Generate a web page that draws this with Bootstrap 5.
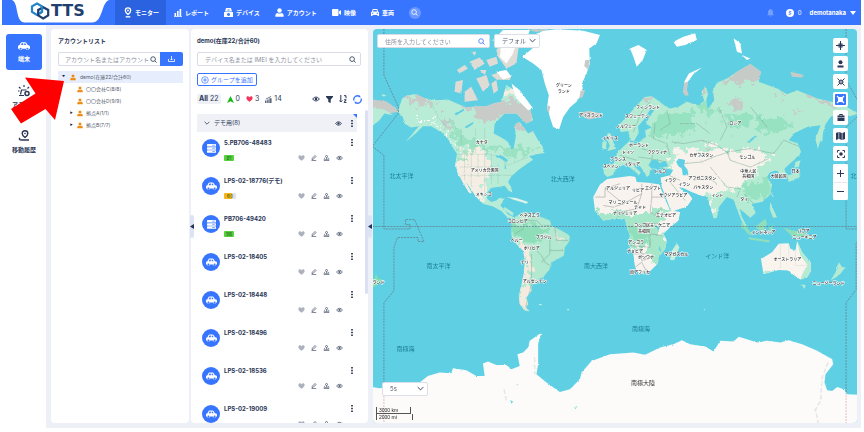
<!DOCTYPE html>
<html lang="ja">
<head>
<meta charset="utf-8">
<meta name="viewport" content="width=device-width, initial-scale=1">
<title>TTS モニター</title>
<link href="https://cdn.jsdelivr.net/npm/bootstrap@5.3.0/dist/css/bootstrap.min.css" rel="stylesheet">
<style>
:root{--blue:#3875ff;--ink:#2b3757;--line:#d9dce6;--shell:#eef0f7}
body{font-family:Inter,"Noto Sans CJK JP",sans-serif;font-size:6px;line-height:8px;color:var(--ink);background:#fff}
svg{display:block;flex:none}
button,input,select{font:inherit;color:inherit}
button{border:0;background:none;padding:0}
a{color:inherit;text-decoration:none}
.app{height:100vh;padding:0 3px 4px 2px}
.topbar{height:25px;background:var(--blue);color:#fff;font-weight:700}
.brand{width:113px;height:25px;position:relative}
.brand .tab{position:absolute;left:0;top:0}
.brand .mark-row{position:relative;padding:2px 0 0 28px;gap:1px;color:#1f3f70;font:bold 16px/18px "DejaVu Sans",sans-serif}
.menu a{height:25px;padding:0 7px 0 8px;gap:3px}
.menu a.on{background:#2a62df;padding-left:9px}
.find{width:12px;height:12px;border-radius:50%;background:#6b98ff;margin-left:8px}
.userbar{padding-right:5px}
.rail{width:44px;padding-top:9px;font-weight:700;gap:9px}
.rail a{width:36px;height:36px;border-radius:3px;gap:4px}
.rail a.on{background:var(--blue);color:#fff}
.stage{background:var(--shell);padding:4px 4px 5px 5px}
.panel{background:#fff;border-radius:4px}
.accounts{width:138px;padding:8px 6px 0 7px}
.devices{width:177px;padding:8px 0 0 6px;margin-left:2px}
.head{font-size:6px;font-weight:700;margin:0 0 8px}
.field{height:14px;min-width:0;border:1px solid var(--line);border-radius:2px;background:#fff;padding:0 4px 0 7px}
.field.wide{margin-right:7px}
.field.addr{width:113px}
.field input{border:0;outline:0;min-width:0;width:0;background:none;padding:0;height:12px}
.field input::placeholder{color:#8b90a0;opacity:1}
.field.joined{border-radius:2px 0 0 2px;border-right:0;padding:0 3px 0 6px}
.import{width:23px;height:14px;flex:none;background:var(--blue);color:#fff;border-radius:0 2px 2px 0}
.tree{margin-top:5px;color:#555c6c;font-size:5px}
.tree .node{height:12px;gap:4px;padding-left:4px}
.tree .node.sub{padding-left:12px;gap:3px}
.tree .node.sel{background:#e6eefd}
.twist{width:4px;font-size:3px;color:#223}
.orange{color:#f08a12}
.addgrp{height:13px;border:1px solid var(--blue);border-radius:2px;color:var(--blue);padding:0 3px;gap:2px;margin-top:7px}
.filters{height:12px;margin:7px 6px 0 0;font-size:7px;gap:6px}
.filters .all{background:#eef0f6;border-radius:2px;padding:1px 2px}
.filters .tools{gap:6px}
.filters .gap-x{gap:2px}
.group{height:18px;flex:none;margin:9px 11px 0 0;background:#f0f1f6;padding:0 4px 0 7px;position:relative}
.group:after{content:"";position:absolute;right:0;top:0;border:2px solid var(--blue);border-left-color:transparent;border-bottom-color:transparent}
.group .more{margin-left:9px}
.list{margin-right:11px;padding-top:1px}
.device{height:38px;padding:6px 4px 0 5px;gap:4px}
.ava{width:18px;height:18px;border-radius:50%;background:var(--blue);color:#fff}
.device h3{font-size:6px;line-height:8px;font-weight:700;margin:0}
.meta{height:10px;margin-top:6px}
.cell{width:10px;height:6px;border-radius:1px;background:#54d13c;color:#2a6b22;font-size:5px;line-height:6px}
.cell.mid{width:12px;background:linear-gradient(90deg,#f7b51a 65%,#dfe2ea 0)}
.acts{gap:6px;color:#5b657c;padding-right:4px}
.bar{position:absolute;right:0;top:81px;width:3px;height:184px;background:#dbe1f3;border-radius:2px}
.grip{position:absolute;width:4px;height:23px;top:186px;z-index:2;background:#dbe3f5;border-radius:2px}
.grip.west{left:-1px}
.grip.east{right:-4px}
.map{margin-left:5px;border-radius:4px;background:#5fd0e4;overflow:hidden}
.world{position:absolute;inset:0;width:100%;height:100%}
.world text{font-family:"Noto Sans CJK JP",sans-serif;font-size:4px;font-weight:500;fill:#222;text-anchor:middle;stroke:#fff;stroke-width:1px;paint-order:stroke}
.world .sea text{font-size:6px;fill:#1c7e93;stroke:none;font-weight:400}
.world .sea .land{fill:#333}
.over{position:relative;z-index:1}
.mapmain{padding:5px 0 3px 3px}
.mapmain .tops{gap:4px;padding-left:1px}
.pick{height:14px;border:1px solid #dcdfe8;border-radius:2px;background:#fff;padding:0 7px;appearance:none;width:46px;color:#50586d}
.pickbox{position:relative}
.pickbox svg{position:absolute;right:4px;top:4px;pointer-events:none}
.pickbox.every{margin:0 0 11px 6px}
.side{gap:3px;padding:9px 9px 0 0}
.side button,.zoomer{width:15px;background:#fff;border-radius:2px}
.side button{height:15px}
.side .zoomer button{height:18px}
.zoomer button+button{border-top:1px solid #e5e7ee}
.side button.on{color:var(--blue)}
.scale{font:5px/6px "Liberation Sans",sans-serif;color:#222}
.scale div{border-left:1px solid #555;padding-left:2px}
.scale .km{width:35px;border-right:1px solid #555;border-bottom:1px solid #555}
.scale .mi{width:37px;border-right:1px solid #555}
.arrow{position:absolute;left:11px;top:76px;z-index:5;pointer-events:none}
</style>
<script src="https://cdn.jsdelivr.net/npm/bootstrap@5.3.0/dist/js/bootstrap.bundle.min.js"></script>
</head>
<body>
<svg width="0" height="0" class="position-absolute" aria-hidden="true">
<symbol id="car" viewBox="0 0 16 12"><path fill="currentColor" fill-rule="evenodd" d="M3.500 1.200Q4 .2 5.200.2H9.500Q10.500.2 11 1l2 3 1.800.7Q16 5 16 6.300V9h-1.300a2.200 2.200 0 0 1-4.300 0H5.700a2.200 2.200 0 0 1-4.300 0H0V6q0-1.500 2-2ZM5 1.700 4 4h3V1.700ZM8.300 1.700V4h2.700L9.500 1.700ZM3.500 7.500a1.300 1.300 0 1 0 .1 0ZM12.500 7.500a1.300 1.300 0 1 0 .1 0Z"/></symbol>
<symbol id="server" viewBox="0 0 12 12"><g fill="currentColor"><rect y="0" width="12" height="3.300" rx=".8"/><rect y="4.200" width="12" height="3.300" rx=".8"/><rect y="8.400" width="12" height="3.300" rx=".8"/></g><path d="M7 1.600h3.500M7 5.800h3.500M7 10h3.500" stroke="#3875ff" stroke-width=".8"/></symbol>
<symbol id="user" viewBox="0 0 12 12"><circle cx="6" cy="3.200" r="3" fill="currentColor"/><path d="M.5 11.500V9.500Q.5 7 3.500 6.500q2.500 1.800 5 0 3 .5 3 3v2Z" fill="currentColor"/></symbol>
<symbol id="pin" viewBox="0 0 12 16"><path fill="none" stroke="currentColor" stroke-width="2" d="M6 11Q2 8 2 5a4 4 0 0 1 8 0q0 3-4 6Z"/><circle cx="6" cy="5" r="1.400" fill="currentColor"/><path stroke="currentColor" stroke-width="2" d="M2.500 14.500h7"/></symbol>
<symbol id="glass" viewBox="0 0 12 12"><circle cx="5.300" cy="5.300" r="4" fill="none" stroke="currentColor" stroke-width="1.400"/><path d="m8.300 8.300 3 3" stroke="currentColor" stroke-width="1.400"/></symbol>
<symbol id="eye" viewBox="0 0 14 10"><path d="M1 5q6-7 12 0-6 7-12 0Z" fill="none" stroke="currentColor" stroke-width="1.600"/><circle cx="7" cy="5" r="2.300" fill="currentColor"/></symbol>
<symbol id="heart" viewBox="0 0 12 11"><path fill="currentColor" d="M6 10.500C2 7.500.3 5.800.3 3.500.3.500 4 -.500 6 2.300 8-.500 11.700.500 11.700 3.500c0 2.300-1.700 4-5.700 7Z"/></symbol>
<symbol id="pen" viewBox="0 0 12 12"><path d="M2.500 6.500 8 1l2 2-5.500 5.500-2.500.5ZM1 11.200h9.500" fill="none" stroke="currentColor" stroke-width="1.700"/></symbol>
<symbol id="track" viewBox="0 0 12 12"><circle cx="6" cy="3" r="2" fill="none" stroke="currentColor" stroke-width="1.700"/><path d="M6 5v3M3 6.500H2L1 11h10l-1-4.500H8M3.500 9h5" fill="none" stroke="currentColor" stroke-width="1.500"/></symbol>
<symbol id="dots" viewBox="0 0 3 12"><path fill="currentColor" d="M0 0h3v2.500H0zM0 4.700h3v2.500H0zM0 9.400h3v2.500H0z"/></symbol>
<symbol id="down" viewBox="0 0 10 6"><path d="m1 1 4 4 4-4" fill="none" stroke="currentColor" stroke-width="1.300"/></symbol>
</svg>

<div class="app d-flex flex-column position-relative">
<header class="topbar d-flex align-items-center">
  <div class="brand">
    <svg class="tab" width="113" height="25" viewBox="0 0 113 25"><path fill="#fff" d="M10 0C17 3 13 22.500 23 22.500H90C101 22.500 99 3 107 0Z"/></svg>
    <div class="mark-row d-flex align-items-center">
      <svg width="20" height="18" viewBox="0 0 20 18"><g fill="none" stroke-width="2.200"><path stroke="#2384c8" d="M7 1.500 12 4.300V10L7 13 2 10V4.300Z"/><path stroke="#1f3f70" d="M13.200 5.200 18.200 8v5.500l-5 3-5-3V8Z"/><path stroke="#2384c8" d="M12 4.300V10L9.500 11.500"/></g></svg>
      <span>TTS</span>
    </div>
  </div>
  <nav class="menu d-flex align-items-center">
    <a href="#" class="on d-flex align-items-center"><svg width="8" height="11"><use href="#pin"/></svg>モニター</a>
    <a href="#" class="d-flex align-items-center"><svg width="8" height="8" viewBox="0 0 8 8"><path fill="#fff" d="M.5 4h1.600v3H.5zM3 2h1.600v5H3zM5.500 0h1.700v7H5.500zM0 7.300h8V8H0z"/></svg>レポート</a>
    <a href="#" class="d-flex align-items-center"><svg width="9" height="9" viewBox="0 0 9 9"><path fill="#fff" fill-rule="evenodd" d="M2 0h5l1 3.500H1ZM0 4h9v5H0ZM3.500 1.500h2v1h-2ZM4.500 5a1.500 1.500 0 1 0 .1 0Z"/></svg>デバイス</a>
    <a href="#" class="d-flex align-items-center"><svg width="9" height="9"><use href="#user"/></svg>アカウント</a>
    <a href="#" class="d-flex align-items-center"><svg width="9" height="7" viewBox="0 0 9 7"><path fill="#fff" d="M0 1q0-1 1-1h4.500q1 0 1 1v5q0 1-1 1H1Q0 7 0 6ZM7 2.500 9 1v5L7 4.500Z"/></svg>映像</a>
    <a href="#" class="d-flex align-items-center"><svg width="8" height="7" viewBox="0 0 8 7"><path fill="#fff" fill-rule="evenodd" d="M1.800 0h4.400l1 2.700.8.500V7H6.500V6h-5v1H0V3.200l.8-.5ZM2.400 1 1.900 2.600h4.200L5.600 1ZM1 3.700v1h1.300v-1ZM5.700 3.700v1H7v-1Z"/></svg>車両</a>
  </nav>
  <button class="find d-flex align-items-center justify-content-center" aria-label="検索"><svg width="7" height="7"><use href="#glass"/></svg></button>
  <div class="userbar ms-auto d-flex align-items-center">
    <svg width="7" height="8" viewBox="0 0 7 8" class="me-2"><path fill="#759fff" d="M3.500 0Q6 .5 6 3.500V5l1 1.200H0L1 5V3.500Q1 .5 3.500 0ZM2.500 6.800h2Q3.500 8.500 2.500 6.800Z"/></svg>
    <svg width="8" height="8" viewBox="0 0 8 8" class="ms-1 me-1"><circle cx="4" cy="4" r="4" fill="#fff"/><path d="M5.300 2.500Q3 1.800 3 3t2 1.200Q5 6 2.700 5.300" fill="none" stroke="#3875ff" stroke-width=".8"/></svg>
    <span class="fw-normal me-2">0</span>
    <a href="#" class="d-flex align-items-center gap-1">demotanaka <svg width="6" height="4" viewBox="0 0 6 4"><path fill="#fff" d="M0 0h6L3 4Z"/></svg></a>
  </div>
</header>

<div class="d-flex flex-grow-1 overflow-hidden">
<nav class="rail d-flex flex-column align-items-center flex-shrink-0">
  <a href="#" class="on d-flex flex-column align-items-center justify-content-center"><svg width="12" height="9"><use href="#car"/></svg>端末</a>
  <a href="#" class="d-flex flex-column align-items-center justify-content-center"><svg width="12" height="12" viewBox="0 0 12 12"><path fill="none" stroke="currentColor" stroke-width="1.200" d="M6 0v2M1 2l1.500 1.500M11 2 9.500 3.500M2.500 9.500 3.500 5h5M1 10.500h5M0 6h1.500"/><circle cx="9" cy="8.500" r="2" fill="none" stroke="currentColor" stroke-width="1.500"/></svg>アラート</a>
  <a href="#" class="d-flex flex-column align-items-center justify-content-center"><svg width="12" height="12" viewBox="0 0 12 12"><path fill="none" stroke="currentColor" stroke-width="1.400" d="M7 7.500Q4.200 5.500 4.200 3.500a2.800 2.800 0 0 1 5.600 0Q9.800 5.500 7 7.500ZM2 8Q0 10 4 10h7"/><circle cx="7" cy="3.500" r=".8" fill="currentColor"/></svg>移動履歴</a>
</nav>

<main class="stage d-flex flex-grow-1">
<section class="panel accounts flex-shrink-0">
  <h2 class="head">アカウントリスト</h2>
  <div class="d-flex">
    <div class="field joined d-flex align-items-center flex-grow-1"><input class="flex-grow-1" type="text" aria-label="アカウント検索" placeholder="アカウント名またはアカウント"><svg width="7" height="7"><use href="#glass"/></svg></div>
    <button class="import d-flex align-items-center justify-content-center" aria-label="インポート"><svg width="7" height="6" viewBox="0 0 7 6"><path d="M.5 3v2.500h6V3M3.500 0v4M2.300 2.800 3.500 4l1.200-1.200" fill="none" stroke="#fff" stroke-width=".8"/></svg></button>
  </div>
  <div class="tree">
    <div class="node sel d-flex align-items-center"><span class="twist">▼</span><svg class="orange" width="6" height="7"><use href="#user"/></svg>demo(在庫22/合計60)</div>
    <div class="node sub d-flex align-items-center"><span class="twist"></span><svg class="orange" width="6" height="7"><use href="#user"/></svg>〇〇会社C(8/8)</div>
    <div class="node sub d-flex align-items-center"><span class="twist"></span><svg class="orange" width="6" height="7"><use href="#user"/></svg>〇〇会社D(9/9)</div>
    <div class="node sub d-flex align-items-center"><span class="twist">▶</span><svg class="orange" width="6" height="7"><use href="#user"/></svg>拠点A(1/1)</div>
    <div class="node sub d-flex align-items-center"><span class="twist">▶</span><svg class="orange" width="6" height="7"><use href="#user"/></svg>拠点B(7/7)</div>
  </div>
</section>

<section class="panel devices flex-shrink-0 position-relative d-flex flex-column">
  <button class="grip west d-flex align-items-center" aria-label="パネルを閉じる"><svg width="4" height="5" viewBox="0 0 4 5"><path fill="#26325a" d="M4 0v5L0 2.500Z"/></svg></button>
  <button class="grip east d-flex align-items-center" aria-label="一覧を閉じる"><svg width="4" height="5" viewBox="0 0 4 5"><path fill="#26325a" d="M4 0v5L0 2.500Z"/></svg></button>
  <div class="bar"></div>
  <h2 class="head">demo(在庫22/合計60)</h2>
  <div class="field wide d-flex align-items-center flex-shrink-0"><input class="flex-grow-1" type="text" aria-label="デバイス検索" placeholder="デバイス名または IMEI を入力してください"><svg width="7" height="7"><use href="#glass"/></svg></div>
  <div class="d-flex"><button class="addgrp d-flex align-items-center"><svg width="8" height="8" viewBox="0 0 8 8"><circle cx="4" cy="4" r="3.300" fill="none" stroke="currentColor" stroke-width=".7"/><path d="M2.200 4h3.600M4 2.200v3.600" stroke="currentColor" stroke-width=".8"/></svg>グループを追加</button></div>
  <div class="filters d-flex align-items-center flex-shrink-0">
    <span class="all"><b>All</b> 22</span>
    <span class="gap-x d-flex align-items-center"><svg width="7" height="7" viewBox="0 0 6 6"><path fill="#14b814" d="M3 0 6 6 3 4.500 0 6Z"/></svg>0</span>
    <span class="gap-x d-flex align-items-center"><svg width="7" height="6" color="#f5365c"><use href="#heart"/></svg>3</span>
    <span class="gap-x d-flex align-items-center"><svg width="7" height="7" viewBox="0 0 8 8"><path fill="#59647b" d="M0 5h1.700v3H0zM2.500 4h1.700v4H2.500zM5 2.500h2.500V8H5z"/><path d="M1 3.500 7 .500" stroke="#59647b"/></svg>14</span>
    <span class="tools ms-auto d-flex align-items-center">
      <svg width="8" height="6"><use href="#eye"/></svg>
      <svg width="7" height="7" viewBox="0 0 7 7"><path fill="currentColor" d="M0 0h7v1L4.700 3.500V7L2.300 6V3.500L0 1Z"/></svg>
      <svg width="8" height="8" viewBox="0 0 8 8"><path d="M1.800 0v7M.3 5.500 1.800 7l1.500-1.500M5 .7h2v2.600M5 4.800h2.200L5 7.400h2.500" fill="none" stroke="currentColor"/></svg>
      <svg width="9" height="9" viewBox="0 0 9 9"><path d="M1 5.500A3.500 3.500 0 0 1 6.500 1.600M8 3.500A3.500 3.500 0 0 1 2.500 7.400" fill="none" stroke="#3875ff" stroke-width="1.300"/><path fill="#3875ff" d="m6 0 2 2.200H5.500ZM3 9 1 6.800h2.500Z"/></svg>
    </span>
  </div>
  <div class="group d-flex align-items-center"><svg width="6" height="4" class="me-1"><use href="#down"/></svg><span>デモ用(8)</span><span class="ms-auto d-flex align-items-center"><svg width="7" height="5"><use href="#eye"/></svg><svg class="more" width="2" height="7"><use href="#dots"/></svg></span></div>
  <div class="list flex-grow-1 overflow-hidden" id="list"></div>
</section>

<section class="map flex-grow-1 position-relative d-flex">
<svg class="world" viewBox="373 29 484 393" preserveAspectRatio="xMidYMid slice">
<defs>
<filter id="rough" x="-5%" y="-5%" width="110%" height="110%" color-interpolation-filters="sRGB"><feTurbulence type="fractalNoise" baseFrequency=".25" numOctaves="3" seed="4"/><feDisplacementMap in="SourceGraphic" scale="6" xChannelSelector="R" yChannelSelector="G"/></filter>
<filter id="patch" x="-5%" y="-5%" width="110%" height="110%" color-interpolation-filters="sRGB"><feTurbulence type="fractalNoise" baseFrequency=".05" numOctaves="4" seed="9"/><feDisplacementMap in="SourceGraphic" scale="60" xChannelSelector="R" yChannelSelector="G"/></filter>
<clipPath id="ca"><path id="na" d="M98 235 112 226 140 222 165 234 200 240 235 238 262 250 290 262 325 258 350 258 372 250 395 245 410 195 435 210 450 240 480 265 490 300 470 310 440 280 405 280 375 310 372 340 395 352 415 365 425 388 432 385 438 350 435 312 450 305 475 340 490 332 500 352 518 378 524 398 500 402 478 408 490 418 470 432 445 450 425 468 415 485 424 500 428 516 418 512 405 496 385 500 365 502 354 515 352 535 365 545 380 540 390 532 404 536 392 555 404 568 415 582 440 594 440 602 412 590 395 572 370 558 340 550 320 530 300 500 287 483 306 517 300 519 282 490 265 460 257 435 262 400 245 375 235 355 215 335 185 318 160 318 140 338 108 365 130 340 148 318 125 322 105 310 100 290 85 275Z"/></clipPath>
<clipPath id="ce"><path id="eu" d="M100 262 102 280 112 290 128 284 136 268 152 258 165 252 182 264 200 278 206 286 212 276 192 258 190 250 210 258 222 274 230 290 238 284 240 270 262 262 310 268 300 285 272 292 276 325 300 395 350 378 366 355 355 340 338 334 325 318 345 325 365 335 392 345 412 350 422 385 430 414 440 412 446 380 470 350 490 358 505 400 522 440 532 440 515 410 508 385 520 395 540 412 556 398 545 370 575 365 600 342 605 312 590 290 598 276 620 270 635 292 650 290 642 265 658 250 672 238 692 215 682 190 655 180 672 158 710 140 750 135 735 178 742 205 765 132 780 110 810 100 840 108 862 100 815 72 740 55 680 30 650 42 620 25 565 5 572 -25 540 -48 500 -25 470 -5 440 8 428 30 432 60 412 88 408 60 414 40 405 18 394 35 402 62 385 75 350 65 325 80 300 85 288 80 265 62 245 48 225 50 200 75 170 110 146 135 152 155 175 152 180 180 192 182 206 158 204 138 224 115 240 88 252 90 238 110 228 130 245 142 225 150 228 170 200 184 180 180 170 190 150 208 140 218 140 235 128 252 105 252Z"/></clipPath>
<clipPath id="cs"><path id="sa" d="M425 45 435 20 460 5 480 8 515 20 540 30 545 45 575 60 600 75 598 95 585 110 582 135 565 145 545 155 540 175 520 200 505 205 505 218 485 222 485 240 470 260 475 280 468 290 480 302 465 300 450 280 447 250 455 225 462 190 465 150 460 120 440 100 425 75Z"/></clipPath>
<clipPath id="cf"><path id="af" d="M112 296 180 287 196 290 200 305 235 307 268 312 280 345 300 390 330 395 325 420 300 440 280 460 290 480 285 505 265 530 262 550 240 572 208 580 195 560 190 520 175 490 180 465 170 440 165 415 130 415 100 420 75 390 70 350 90 312Z"/></clipPath>
</defs>
<g transform="translate(370 20) scale(.3333)" filter="url(#rough)">
  <use href="#na" fill="#b9ecd6"/>
  <g clip-path="url(#ca)">
    <g filter="url(#patch)">
    <path fill="#c9cbc8" d="M105 225 160 225 200 250 150 256 110 245ZM275 240H500V325H440L400 285 370 310 330 300 310 275 275 265ZM215 290 235 290 255 315 235 320Z"/>
    <path fill="#f5eee4" d="M262 415 300 375 345 390 365 430 355 480 330 520 350 550 310 530 270 480ZM395 190 440 205 445 225 410 215Z"/>
    <path fill="#91dfbc" opacity=".75" d="M235 290 265 335 330 370 440 385 510 385 430 410 380 390 300 385 260 365ZM262 400 285 400 300 430 270 425Z"/>
    <path fill="none" stroke="#fff" stroke-width="5" stroke-dasharray="9 7" d="M145 305 195 305 235 350 275 390"/>
    </g>
    <path fill="none" stroke="#7aa99b" opacity=".7" d="M180 235 205 290 245 340M260 402H365L390 410 415 435 475 410M285 402V480M305 402V500M325 402V470M345 402V520M365 402V490M385 430V490M270 440H385M275 465H430M275 325V400M318 325V400M345 325V400"/>
  </g>
  <path fill="#5fd0e4" d="m285 320 25-15 3 5-22 14ZM255 280l28-14 1 5-25 15ZM380 405q15-5 35 15l-5 6q-20-16-30-14ZM405 425l5 22-5-2Z"/>
  <path fill="#c9cbc8" d="M8 238 50 243 78 262 86 275 60 280 8 265Z"/><path fill="#b9ecd6" d="M8 262 45 268 72 285 45 280 30 300 8 318ZM37 222l14 3-8 5Z"/>
  <path fill="#dedcd5" d="M262 150 285 135 295 145 270 160ZM300 125 330 112 345 130 315 150ZM258 185 280 180 275 220 255 215ZM285 215 305 200 325 240 285 245ZM320 175 350 165 360 195 340 215ZM365 190 380 180 385 210 372 220ZM305 95l15 0-5 12ZM350 120 380 110 385 130 360 140ZM380 90 405 60 430 80 450 60 440 130 410 145 385 110ZM365 165 385 158 425 168 420 180 380 178ZM330 150l20 0-4 15Z"/>
  <path fill="#fff" d="M370 60 400 30H480L470 60 440 70 430 100 410 130 390 110 395 80ZM380 155 410 150 425 170 400 178ZM425 190 450 210 490 265 475 270 440 235Z"/>
  <path fill="#fff" d="M458 110 500 75 480 50 520 32 560 28 640 32 690 45 680 70 658 85 660 130 650 160 636 190 640 215 620 245 600 262 580 290 568 327 550 320 540 290 532 260 537 225 525 190 515 150 490 130Z"/>
  <path fill="#c9cbc8" d="M470 28H540L500 36ZM646 120l14 0-5 30-12-12ZM534 255l8 5-5 18-6-8ZM625 280 655 272 695 280 690 292 655 298ZM632 212l14-3-8 22-10 4Z"/>
  <path fill="#dff3e6" d="M410 530 440 533 475 545 470 550 430 537Z"/>
</g>
<g transform="translate(370 210) scale(.3333)" filter="url(#rough)">
  <use href="#sa" fill="#b2e9d0"/><path fill="#b9ecd6" d="M405-10 432 8 428 16 400-4Z"/>
  <g clip-path="url(#cs)"><g filter="url(#patch)"><path fill="#8edfb9" d="M430 40 500 40 540 65 500 95 460 90 430 65Z"/><path fill="#f5eadf" d="M430 80 480 115 485 160 475 230 490 240 470 310 445 290 460 150ZM555 75 575 80 570 100Z"/></g><path fill="none" stroke="#76a695" stroke-width="1.500" d="M435 70 460 55 465 30 500 30 515 45 545 45M465 105 490 110 515 135 525 155 540 165M485 130V220L468 290M540 85V130L515 155M555 50 560 90 595 90M540 120H580"/></g>
  <path fill="#fcfbfa" d="M-10 525 30 532 150 515 175 495 210 485 245 487 250 472 290 478 320 495 345 495 340 458 355 452 380 462 410 462 425 475 450 465 443 430 460 425 475 410 480 390 515 365 505 400 505 460 500 490 530 515 570 543 600 535 630 505 635 485 665 450 700 438 720 430 790 425 825 432 870 410 910 400 935 388 960 400 1005 407 1030 422 1050 390 1090 392 1105 378 1130 385 1160 395 1190 390 1230 395 1255 388 1295 400 1340 420 1385 445 1388 460 1365 490 1362 515 1370 538 1385 540 1400 528 1420 535 1430 550 1480 552V670H-10Z"/>
  <path fill="#5fd0e4" d="m422 567 8 5-5 6ZM440 520h4v4ZM613 590l8-6-3 10Z"/><path fill="#dff3e6" d="M505 280h10v4ZM590 295h7v4ZM1000 295h4v4Z"/><path fill="none" stroke="#e3e5e3" stroke-width="4" d="M495 440V490M403 535 410 570M1373 455 1355 500 1350 570 1335 595 1345 645" stroke-dasharray="14 6"/>
  <path fill="#7edfb0" d="M20 190 28 205 40 205 15 230 8 225Z"/>
</g>
<g transform="translate(570 80) scale(.3333)" filter="url(#rough)">
  <use href="#eu" fill="#b5ebd3"/>
  <g clip-path="url(#ce)">
    <g filter="url(#patch)">
    <path fill="#8edfba" opacity=".75" d="M240 140 290 100 370 95 370 155 310 165 240 160ZM460 110 530 95 545 130 480 150ZM560 110 640 110 670 140 600 160 560 150ZM510 320 600 290 600 350 540 360ZM370 70 420 110 440 100 400 60Z"/>
    <path fill="#f8f2ec" d="M300 240 320 205 395 210 440 195 470 215 540 205 600 225 610 250 565 250 560 285 520 310 495 325 440 330 410 345 430 400 425 420 400 370 250 430 245 270 300 268Z"/>
    <path fill="#c6cbc7" d="M455 0 530-60 590-30 575-2 500 14ZM485 60 510 48 520 75 495 90ZM620 20 640 40 645 65 625 45ZM665 95 690 90 690 105ZM690 30 745 50 830 75 780 76 710 50ZM220 50 240 48 245 62 225 65ZM395 15 408 15 415 40 400 60ZM400 180 420 185 415 195Z"/>
    </g>
    <path fill="#f8f2ec" d="M270 292 310 290 340 330 370 350 350 380 300 398Z"/>
    <path fill="none" stroke="#7fa99b" stroke-width="1.500" d="M305 185 340 190 395 180 440 195 470 215 540 205 610 220 640 180 690 200M470 215 480 240 540 260 595 235M340 250 395 245 430 230 475 215M420 260 470 320 510 325 500 350M370 300 410 290 440 310M285 280 330 300M300 305 345 360M215 205 250 215 245 235M205 230 240 235 290 245M190 155 215 95 240 65M150 225 200 240M255 130 250 175 290 190 300 230M520 340 550 370M270 150 300 130 290 90M330 130 380 130 420 160M445 80 470 140 450 180M540 80 590 140"/>
  </g>
  <path fill="#5fd0e4" d="M235 255 245 238 262 240 268 248 285 242 295 258 270 262 245 265ZM318 245 325 235 345 238 342 255 352 268 355 285 338 285 335 265 325 258ZM180 180 200 185 222 172 205 190 180 188ZM388 225l15-2-8 8ZM530 185l25-20 2 5-20 18Z"/>
  <path fill="#5fd0e4" d="M268 318 276 322 302 390 296 394Z"/>
  <path fill="#b5ebd3" d="M112 160 120 158 128 180 138 205 112 212 120 195 112 180ZM97 185 110 182 108 205 96 208ZM675 245 690 240 685 260 672 262ZM650 285 675 280 685 265 688 290 655 305ZM678 230 685 200 688 225ZM605 335l5 15-8-5ZM600 365 608 385 620 410 608 412 598 385ZM735 170 760 135 755 185Z"/>
  <path fill="#8edfba" d="M510 425 525 435 548 465 535 462 515 440ZM535 470 600 480 595 486 535 476ZM556 438 585 415 590 430 580 450 562 448ZM595 440 610 435 600 460ZM640 442 665 450 700 455 730 475 700 470 665 468Z"/>
  <path fill="#c9cbc8" d="M338 35 343 5 350-5 354 8 350 28 356 45 345 47ZM660-25 700-15 695-8 665-10Z"/><path fill="#fff" d="M341 8 356-20 395-38 370-18 353 5Z"/><path fill="#fff" d="M180-95 205-105 230-90 218-60 200-40 190-70ZM310-115 340-130 375-140 380-120 345-105 320-100ZM490-125 510-110 515-80 500-85ZM515-75 540-65 530-60Z"/>
  <use href="#af" fill="#f8f3ee"/>
  <g clip-path="url(#cf)"><g filter="url(#patch)"><path fill="#a6e6c9" d="M60 385 120 398 200 400 250 395 280 395 300 375 290 405 270 430 285 480 310 500 280 540 260 580 250 540 225 500 160 500 150 430 90 440Z"/><path fill="#8edfba" d="M180 440 235 440 240 490 190 490Z"/></g><path fill="#5fd0e4" d="M258 438l12 0-5 12ZM268 495l6 20-8-8Z"/><path fill="none" stroke="#8c9490" stroke-width="1.500" d="M75 350 105 350V325L150 310M105 325 160 370 215 340 215 310M245 310V350H280M160 370 130 380 100 375M215 340 200 385 150 395M245 350 240 395 265 410M175 440 230 430 265 430M180 495 240 500V460L275 465M215 500V540L250 530M190 520H225M195 560 215 545 230 575M140 385 145 410M255 400 275 385"/></g>
  <path fill="#c5eedb" d="M320 488 328 500 312 540 300 538 302 515Z"/>
  <path fill="#faf4ee" d="M572 535 605 515 625 490 655 488 660 505 675 510 680 482 695 515 720 545 722 570 710 590 690 597 665 580 655 570 625 568 580 580 575 555Z"/><path fill="#b5ebd3" d="M680 482 695 515 720 545 722 570 710 590 690 597 700 570 712 555 690 525ZM692 612h15l-5 12ZM580 580l5-10 22 3ZM805 545 815 560 825 560 805 585 780 600 795 575Z"/><path fill="none" stroke="#c8cfca" d="M630 490V565M675 510V555H720M675 530H655V490"/>
</g>
<g fill="none" stroke="#66808f" stroke-width=".8" stroke-dasharray="2 1">
<path d="M384.500 29V75L399 107V113L373 146 384.500 155V228.500H410.500V224H406V219H415L424.500 241H418.500V237H398L394.500 247V290L384.500 302V384M373 226H857M845.500 29V80L857 100M857 116 845.500 127V228.500H857M857 240 855.500 243V289L845.500 302V393"/>
<path stroke="#dcb0b0" d="M384.500 395V422M845.500 394V422"/></g>
<g class="sea"><text x="402" y="178">北太平洋</text><text x="563" y="181">北大西洋</text><text x="439" y="267">南太平洋</text><text x="596" y="267">南大西洋</text><text x="717" y="257">インド洋</text><text x="406" y="350">南極海</text><text x="641" y="330">南極海</text><text x="853" y="178">北</text><text x="643" y="384" class="land">南極大陸</text></g>
<g><text x="564" y="87">グリーン</text><text x="564" y="93">ランド</text><text x="591" y="117">アイスランド</text><text x="482" y="144">カナダ</text><text x="485" y="172">アメリカ合衆国</text><text x="484" y="196">メキシコ</text><text x="530" y="217">ベネズエラ</text><text x="518" y="223">コロンビア</text><text x="544" y="238">ブラジル</text><text x="517" y="241">ペルー</text><text x="532" y="249">ボリビア</text><text x="525" y="263">チリ</text><text x="535" y="282">アルゼンチン</text><text x="648" y="109">フィンランド</text><text x="637" y="118">スウェーデン</text><text x="626" y="128">ノルウェー</text><text x="610" y="140">イギリス</text><text x="639" y="147">ポーランド</text><text x="628" y="154">ドイツ</text><text x="657" y="154">ウクライナ</text><text x="618" y="161">フランス</text><text x="632" y="166">イタリア</text><text x="611" y="168">スペイン</text><text x="660" y="173">トルコ</text><text x="735" y="125">ロシア</text><text x="701" y="157">カザフスタン</text><text x="747" y="159">モンゴル</text><text x="748" y="173">中華人民</text><text x="748" y="178">共和国</text><text x="778" y="178">大韓民国</text><text x="795" y="173">日本</text><text x="670" y="182">イラク</text><text x="684" y="186">イラン</text><text x="702" y="180">アフガニスタン</text><text x="703" y="189">パキスタン</text><text x="673" y="197">サウジアラビア</text><text x="717" y="197">インド</text><text x="744" y="201">タイ</text><text x="618" y="190">アルジェリア</text><text x="638" y="192">リビア</text><text x="653" y="190">エジプト</text><text x="623" y="204">マリ ニジェール</text><text x="640" y="209">チャド</text><text x="625" y="215">ナイジェリア</text><text x="666" y="217">エチオピア</text><text x="644" y="227">コンゴ民主</text><text x="644" y="232">共和国</text><text x="664" y="227">ケニア</text><text x="636" y="243">アンゴラ</text><text x="635" y="252">ナミビア</text><text x="646" y="258">ボツワナ</text><text x="640" y="273">南アフリカ</text><text x="676" y="255">マダガスカル</text><text x="763" y="233">インドネシア</text><text x="803" y="232">パプア</text><text x="804" y="238">ニューギニア</text><text x="787" y="260">オーストラリア</text><text x="828" y="284">ニュージーランド</text><text x="379" y="283">ランド</text></g>
</svg>
<div class="over mapmain d-flex flex-column justify-content-between flex-grow-1">
  <div class="tops d-flex">
    <div class="field addr d-flex align-items-center"><input class="flex-grow-1" type="text" aria-label="住所検索" placeholder="住所を入力してください"><svg width="7" height="7" color="#3875ff"><use href="#glass"/></svg></div>
    <div class="pickbox"><select class="pick" aria-label="地図の種類"><option>デフォル</option></select><svg width="7" height="5"><use href="#down"/></svg></div>
  </div>
  <div>
    <div class="pickbox every d-inline-block"><select class="pick" aria-label="更新間隔"><option>5s</option></select><svg width="7" height="5"><use href="#down"/></svg></div>
    <div class="scale"><div class="km">3000 km</div><div class="mi">2000 mi</div></div>
  </div>
</div>
<div class="over side d-flex flex-column ms-auto">
  <button class="d-flex align-items-center justify-content-center" aria-label="現在地"><svg width="9" height="9" viewBox="0 0 9 9"><circle cx="4.500" cy="4.500" r="2.800" fill="#8d95a8"/><path d="M4.500 0v9M0 4.500h9" stroke="currentColor"/><circle cx="4.500" cy="4.500" r="1.400" fill="currentColor"/></svg></button>
  <button class="d-flex align-items-center justify-content-center" aria-label="ストリートビュー"><svg width="7" height="8" viewBox="0 0 7 8"><circle cx="3.500" cy="2.200" r="2" fill="currentColor"/><path d="M.5 6.500h6" stroke="currentColor" stroke-width="2"/></svg></button>
  <button class="d-flex align-items-center justify-content-center" aria-label="範囲"><svg width="8" height="8" viewBox="0 0 8 8"><path d="m.5.500 7 7M7.500.500l-7 7" stroke="currentColor"/><circle cx="4" cy="4" r="2" fill="#9aa1b2" stroke="currentColor"/></svg></button>
  <button class="on d-flex align-items-center justify-content-center" aria-label="全体表示"><svg width="11" height="11" viewBox="0 0 11 11"><rect width="11" height="11" rx="1" fill="currentColor"/><path d="m2 2 2 2M9 2 7 4M2 9l2-2M9 9 7 7" stroke="#fff" stroke-width="1.200"/><rect x="3" y="3" width="5" height="5" fill="#fff"/></svg></button>
  <button class="d-flex align-items-center justify-content-center" aria-label="ツール"><svg width="8" height="7" viewBox="0 0 8 7"><path d="M2.500 1.500V.5h3v1" fill="none" stroke="currentColor"/><path fill="currentColor" d="M.5 1.500h7v2h-7zM.5 4h7v3h-7z"/></svg></button>
  <button class="d-flex align-items-center justify-content-center" aria-label="地図"><svg width="9" height="8" viewBox="0 0 9 8"><path fill="currentColor" d="m0 1 2.600-1v7L0 8ZM3.200 0l2.600 1v7L3.200 7ZM6.400 1 9 0v7L6.400 8Z"/></svg></button>
  <button class="d-flex align-items-center justify-content-center" aria-label="中央"><svg width="8" height="8" viewBox="0 0 8 8"><path d="M.5 2.500v-2h2M5.500.5h2v2M7.500 5.500v2h-2M2.500 7.500h-2v-2" fill="none" stroke="currentColor"/><circle cx="4" cy="4" r="1.800" fill="currentColor"/></svg></button>
  <div class="zoomer d-flex flex-column">
    <button class="d-flex align-items-center justify-content-center" aria-label="拡大"><svg width="7" height="7" viewBox="0 0 7 7"><path d="M0 3.500h7M3.500 0v7" stroke="currentColor"/></svg></button>
    <button class="d-flex align-items-center justify-content-center" aria-label="縮小"><svg width="7" height="7" viewBox="0 0 7 7"><path d="M0 3.500h7" stroke="currentColor"/></svg></button>
  </div>
</div>
</section>
</main>
</div>
<svg class="arrow" width="54" height="48" viewBox="0 0 54 48"><path fill="#fe0000" d="M14 1.500 53 5 44 44 34.500 33 10 47.500 0 33 24.500 17.500Z"/></svg>
</div>
<script>
const devices = [
  ['5.PB706-48483','server','81'],['LPS-02-18776(デモ)','car','60','mid'],['PB706-49420','server','98'],
  ['LPS-02-18405','car'],['LPS-02-18448','car'],['LPS-02-18496','car'],['LPS-02-18536','car'],['LPS-02-19009','car']
];
const act = (id, label, w, tone = '') => `<button class="${tone}" aria-label="${label}"><svg width="${w}" height="6"><use href="#${id}"/></svg></button>`;
document.getElementById('list').innerHTML = devices.map(([name, icon, level, mid]) => `
  <div class="device d-flex">
    <span class="ava d-flex align-items-center justify-content-center flex-shrink-0"><svg width="11" height="9"><use href="#${icon}"/></svg></span>
    <div class="flex-grow-1">
      <h3>${name}</h3>
      <div class="meta d-flex align-items-center justify-content-between">
        ${level ? `<span class="cell text-center ${mid || ''}">${level}</span>` : '<span></span>'}
        <span class="acts d-flex align-items-center">${act('heart','お気に入り',7,'opacity-50')}${act('pen','編集',6)}${act('track','追跡',7)}${act('eye','表示',7)}</span>
      </div>
    </div>
    <button class="align-self-start" aria-label="メニュー"><svg width="2" height="7"><use href="#dots"/></svg></button>
  </div>`).join('');
</script>
</body>
</html>
